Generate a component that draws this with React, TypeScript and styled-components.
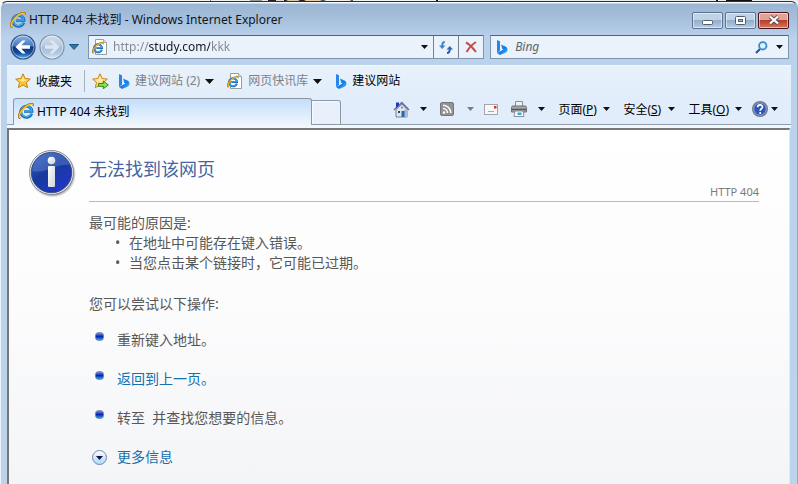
import React from 'react';
import styled, { createGlobalStyle, css } from 'styled-components';

const GlobalStyle = createGlobalStyle`
  *, *::before, *::after { box-sizing: border-box; }
  body { margin: 0; background: #fff; }
  body, button, input { font-family: "Noto Sans", "Noto Sans CJK SC", sans-serif; }
  button { border: 0; padding: 0; background: none; color: inherit; font-size: inherit; }
  svg { display: block; flex: none; }
`;

const Desktop = styled.div`
  display: flex;
  flex-direction: column;
  min-height: 100vh;
  padding-top: 1px;
  background: linear-gradient(90deg, #f6f6f4 0 210px, #778 210px 211px, #eef2f2 211px 250px, #999 250px 262px, #eee 262px 268px, #222 268px 276px, #ddd 276px 284px, #222 284px 286px, #dca 288px 298px, #222 300px 304px, #eca 306px 320px, #456 322px 324px, #eee 326px 350px, #654 351px 353px, #eef5f8 353px 436px, #111 436px 438px, #e8eef0 438px 716px, #111 716px 718px, #eee 718px 726px, #111 726px 752px, #eee 752px);
`;

const Window = styled.div`
  flex: 1;
  display: flex;
  flex-direction: column;
  padding: 0 6px;
  border: 1px solid #eef5fb;
  border-top-color: #263238;
  border-right-color: #4fc4e6;
  border-bottom: 0;
  border-radius: 7px 7px 0 0;
  background: linear-gradient(#f6fafd 0 1px, #9bb6d3 2px, #a7c0dc 18px, #bad2ec 36px, #bcd3eb 100%);
`;

const TitleBar = styled.header`
  display: flex;
  align-items: center;
  gap: 3px;
  height: 32px;
  padding: 4px 2px 0 3px;
`;

const WindowTitle = styled.h1`
  flex: 1;
  margin: 0;
  color: #10151c;
  font-size: 12px;
  font-weight: 400;
  line-height: 18px;
  white-space: nowrap;
`;

const WindowButtons = styled.div`
  display: flex;
  gap: 2px;
`;

const WindowButton = styled.button<{ $close?: boolean }>`
  display: grid;
  place-items: center;
  width: 31px;
  height: 17px;
  border: 1px solid #5d7490;
  border-radius: 2px;
  box-shadow: inset 0 0 0 1px rgba(255, 255, 255, 0.5);
  background: linear-gradient(#bfd2e6 0 50%, #93aecb 50%, #b3cce6);
  ${(p) => p.$close && css`
    border-color: #4b1420;
    background: linear-gradient(#e0a398 0 50%, #b83f2c 50%, #d27a58);
  `}
`;

const NavBar = styled.div`
  display: flex;
  align-items: center;
  height: 31px;
  padding: 0 2px 5px 3px;
`;

const HistoryButtons = styled.div`
  display: flex;
  align-items: center;
  gap: 3px;
  margin-right: 8px;
`;

const HistoryMenu = styled.button`
  display: grid;
  place-items: center;
  width: 12px;
  height: 24px;
`;

const Field = styled.div<{ $search?: boolean }>`
  display: flex;
  align-items: center;
  flex: ${(p) => (p.$search ? '297 1 0' : '398 1 0')};
  min-width: 0;
  height: 24px;
  margin-left: ${(p) => (p.$search ? '6px' : '0')};
  padding-left: ${(p) => (p.$search ? '5px' : '3px')};
  border: 1px solid #7e93ac;
  border-top-color: #5a6470;
  border-radius: 1px;
  background: #eaf2fb;
`;

const AddressInput = styled.input`
  flex: 1;
  min-width: 0;
  margin-left: 5px;
  padding: 0;
  border: 0;
  outline: 0;
  font-size: 12px;
  line-height: 20px;
  color: transparent;
  background: linear-gradient(90deg, #83878c 0 36px, #15181c 36px 97px, #83878c 97px);
  background-clip: text;
  -webkit-background-clip: text;
`;

const SearchInput = styled.input`
  flex: 1;
  min-width: 0;
  margin-left: 7px;
  padding: 0;
  border: 0;
  outline: 0;
  background: none;
  font-size: 12px;
  font-style: italic;
  line-height: 20px;
  &::placeholder { color: #5f656c; opacity: 1; }
`;

const FieldButton = styled.button<{ $divided?: boolean }>`
  display: grid;
  place-items: center;
  width: ${(p) => (p.$divided ? '25px' : '18px')};
  height: 22px;
  border-left: ${(p) => (p.$divided ? '1px solid #76818f' : '0')};
`;

const Chrome = styled.div`
  display: flex;
  flex-direction: column;
  border-top: 1px solid #f4f9fe;
  background: linear-gradient(#e9f2fb, #e1edfa 34px, #e1edfa);
`;

const FavoritesBar = styled.nav`
  display: flex;
  align-items: center;
  height: 32px;
  padding: 0 8px 2px;
`;

const FavoritesButton = styled.button`
  display: flex;
  align-items: center;
  gap: 4px;
  height: 22px;
  padding-right: 12px;
  border-right: 1px solid #a9b1ba;
  font-size: 12px;
  white-space: nowrap;
`;

const AddFavorite = styled.button`
  margin: 0 9px 0 7px;
`;

const Bookmark = styled.a<{ $dim?: boolean }>`
  display: flex;
  align-items: center;
  gap: 5px;
  margin-right: 13px;
  color: ${(p) => (p.$dim ? '#7d828a' : '#000')};
  font-size: 12px;
  line-height: 18px;
  text-decoration: none;
  white-space: nowrap;
`;

const TabRow = styled.div`
  display: flex;
  align-items: flex-end;
  height: 30px;
  padding-bottom: 3px;
  background: linear-gradient(transparent 26px, #8f9fb1 26px 27px, #f3f7fc 27px);
`;

const Tab = styled.button`
  display: flex;
  align-items: center;
  gap: 3px;
  flex: 0 1 299px;
  min-width: 140px;
  height: 27px;
  margin-left: 6px;
  padding: 0 0 2px 4px;
  border: 1px solid #8d98a5;
  border-bottom: 0;
  border-radius: 3px 3px 0 0;
  background: linear-gradient(#c3defb, #f0f6fd);
  font-size: 12px;
`;

const NewTab = styled.button`
  flex: none;
  width: 29px;
  height: 25px;
  border: 1px solid #8d98a5;
  border-left: 0;
  border-radius: 0 3px 0 0;
  background: #e8f1fb;
  box-shadow: inset 1px 1px #f8fbfe;
`;

const CommandBar = styled.div`
  flex: 1;
  align-self: stretch;
  display: flex;
  align-items: center;
  justify-content: flex-end;
  gap: 13px;
  padding: 0 13px 5px 0;
`;

const Command = styled.button<{ $size?: 'icon' | 'text' | 'single' }>`
  display: flex;
  align-items: center;
  justify-content: space-between;
  gap: ${(p) => (p.$size === 'text' ? '6px' : '4px')};
  min-width: ${(p) => (p.$size === 'text' ? '52px' : p.$size === 'single' ? '14px' : '34px')};
  margin-left: ${(p) => (p.$size === 'single' ? '-3px' : '0')};
  height: 20px;
  font-size: 12px;
  white-space: nowrap;
`;

const HelpCommand = styled(Command)`
  min-width: 26px;
  margin-left: -3px;
  gap: 2px;
`;

const Page = styled.main`
  flex: 1;
  margin-right: 1px;
  padding: 20px 30px 18px 20px;
  border: 2px solid #74777a;
  border-top-color: #77777a;
  border-right: 1px solid #e8e8e8;
  border-bottom: 0;
  background: linear-gradient(#fff, #fcfcfd 45%, #f4f5f7);
  color: #575757;
  font-size: 14px;
  line-height: 20px;
`;

const PageHeader = styled.div`
  display: grid;
  grid-template-columns: 48px 1fr;
  column-gap: 12px;
`;

const HeadingArea = styled.div`
  display: flex;
  flex-direction: column;
  height: 52px;
  padding-top: 6px;
  border-bottom: 1px solid #b6bac6;
`;

const Heading = styled.h2`
  margin: 0;
  color: #4465a2;
  font-size: 18px;
  font-weight: 400;
  line-height: 26px;
`;

const ErrorCode = styled.span`
  align-self: flex-end;
  color: #7b7b7b;
  font-size: 11px;
  line-height: 20px;
`;

const Body = styled.div`
  padding: 11px 0 0 60px;
`;

const Paragraph = styled.p`
  margin: 0;
`;

const Reasons = styled.ul`
  margin: 0 0 21px;
  padding-left: 40px;
`;

const Reason = styled.li`
  list-style: none;
  display: flex;
  &::before { content: "•"; width: 14px; margin-left: -14px; }
`;

const Actions = styled.ul`
  margin: 16px 0 0;
  padding: 0;
  list-style: none;
  display: grid;
  gap: 19px;
`;

const Action = styled.li`
  display: grid;
  grid-template-columns: 20px 1fr;
  column-gap: 8px;
  white-space: pre;
  svg { justify-self: center; margin-top: 2px; }
`;

const PageLink = styled.a`
  color: #1470b0;
  text-decoration: none;
`;

const MoreInfo = styled.button`
  display: flex;
  align-items: center;
  gap: 9px;
  margin: 19px 0 0 2px;
  color: #1470b0;
  font-size: 14px;
  line-height: 20px;
`;

const Arrow = ({ color = '#111', large }: { color?: string; large?: boolean }) => (
  <svg width={large ? 9 : 7} height={large ? 5 : 4} viewBox="0 0 7 4" preserveAspectRatio="none"><path d="M0 0h7L3.5 4z" fill={color} /></svg>
);

const IeShapes = () => (
  <>
    <path d="M13.7 10.6A5.6 5.6 0 1 1 14 8.4H6" fill="none" stroke="#1565b5" strokeWidth="2.8" />
    <path d="M13.4 10.4A5.4 5.4 0 1 1 13.8 8H6" fill="none" stroke="#41a9ec" strokeWidth="1.5" />
    <path d="M2.4 15.3C-1 14.5 1.7 8 6.6 4 11 .5 15.700-.5 15.400 3" fill="none" stroke="#a87308" strokeWidth="2" />
    <path d="M2.2 14.8C0 13.500 2.500 8 6.800 4.400 10.500 1.300 15 .2 15 2.800" fill="none" stroke="#ffc832" strokeWidth="1.300" />
  </>
);

const IeLogo = () => <svg width="16" height="16" viewBox="0 0 16 16"><IeShapes /></svg>;

const IePage = () => (
  <svg width="16" height="16" viewBox="0 0 16 16">
    <path d="M3.500.5h8l3 3v12h-11z" fill="#fff" stroke="#999ca0" />
    <path d="M11.500.5v3h3" fill="#ddd" stroke="#aaa" />
    <g transform="translate(0 3) scale(.72)"><IeShapes /></g>
  </svg>
);

const Bing = () => (
  <svg width="12" height="15" viewBox="0 0 12 15">
    <defs><linearGradient id="bing" x2="1" y2="1"><stop stopColor="#3c91ef" /><stop offset=".55" stopColor="#167be8" /><stop offset="1" stopColor="#48d2e6" /></linearGradient></defs>
    <path d="M1 0l3 1.300v9.400L1 13z" fill="#2786ec" />
    <path d="M5 4.500l5 2.200q1.500.9 1.500 2.800c0 1.700-1 2.700-2 3.300L4 15 1 13l6.500-3.500-1.300-.7z" fill="url(#bing)" />
  </svg>
);

const Star = ({ add }: { add?: boolean }) => (
  <svg width="17" height="16" viewBox="0 0 17 16">
    <path d="M8 .8l2.100 4.700 5.200.6-3.900 3.400 1.200 5.200L8 12l-4.700 2.700 1.200-5.200L.7 6.100l5.200-.6z" fill={add ? '#ffdf83' : '#ffc62c'} stroke="#c78314" strokeLinejoin="round" />
    <path d="M8 3l1.300 3.400 3.500.4L8 8.500 3.200 6.800l3.500-.4z" fill="#fff3b8" opacity=".8" />
    {add && <path d="M6.500 10.500h4.800V8l5 4-5 3.700v-2.400H6.500z" fill="#8fe04c" stroke="#258b23" strokeLinejoin="round" />}
  </svg>
);

const RoundArrow = ({ forward }: { forward?: boolean }) => {
  const id = forward ? 'forwardOrb' : 'backOrb';
  return (
    <svg width="26" height="26" viewBox="0 0 26 26">
      <defs>
        <linearGradient id={id} x2="0" y2="1">
          <stop stopColor={forward ? '#d2deeb' : '#90b4e5'} />
          <stop offset=".46" stopColor={forward ? '#b8cade' : '#4379c4'} />
          <stop offset=".5" stopColor={forward ? '#a6bdd6' : '#0d317f'} />
          <stop offset=".75" stopColor={forward ? '#aec7e0' : '#174b9e'} />
          <stop offset="1" stopColor={forward ? '#dce8f4' : '#5cc5ff'} />
        </linearGradient>
      </defs>
      <circle cx="13" cy="13" r="12" fill={`url(#${id})`} stroke={forward ? '#7f94ab' : '#344f7b'} strokeWidth="1.200" />
      <circle cx="13" cy="13" r="10.900" fill="none" stroke="#fff" opacity=".45" />
      <path d="M5.500 13l6.700-6.500h3.500l-4.300 4.800H20v3.400h-8.600l4.300 4.800h-3.500z" transform={forward ? 'matrix(-1 0 0 1 26 0)' : undefined} fill={forward ? '#dce6f0' : '#fff'} />
    </svg>
  );
};

const Refresh = () => (
  <svg width="14" height="13" viewBox="0 0 14 13">
    <path d="M5.800 1Q3.200 1 3.200 5" fill="none" stroke="#3c86c8" strokeWidth="2" /><path d="M0 4.500h6.400L3.200 8z" fill="#3c86c8" />
    <path d="M8 12q2.800 0 2.800-4" fill="none" stroke="#245fae" strokeWidth="2" /><path d="M7.500 8.500H14L10.800 5z" fill="#2c69b5" />
  </svg>
);

const Stop = () => (
  <svg width="12" height="12" viewBox="0 0 12 12"><path d="M1 1.500c4 2 6.500 5 10 9.500M11 1C7 3.500 4 7 1.500 11" fill="none" stroke="#c84a49" strokeWidth="2" /></svg>
);

const Search = () => (
  <svg width="13" height="13" viewBox="0 0 13 13"><path d="M5 8L1 12" stroke="#2a55a4" strokeWidth="2.200" /><circle cx="7.800" cy="4.800" r="3.700" fill="#dff1fc" stroke="#388bcd" strokeWidth="1.800" /></svg>
);

const Home = () => (
  <svg width="17" height="17" viewBox="0 0 17 17">
    <path d="M3 8.500L9 3l5 5.500V16H3z" fill="#e1e5ee" stroke="#778096" />
    <path d="M11 9v7h3.500V8z" fill="#afb8cc" />
    <path d="M1 9l7.800-7.500L16 9" fill="none" stroke="#6570a0" strokeWidth="1.500" />
    <path d="M3 1.500h3v3L3 7z" fill="#2739b8" />
    <path d="M8.500 10h3v6h-3z" fill="#2369ad" /><path d="M5 10h2v2H5z" fill="#28446d" />
    <circle cx="9" cy="6.500" r="1" fill="#6a7bb9" />
  </svg>
);

const Feed = () => (
  <svg width="14" height="14" viewBox="0 0 14 14">
    <rect x=".5" y=".5" width="13" height="13" rx="1.500" fill="#929292" stroke="#777" />
    <circle cx="4" cy="10.500" r="1.300" fill="#fff" /><path d="M3 6.500a4.500 4.500 0 0 1 4.500 4.500M3 3.200A7.800 7.800 0 0 1 10.800 11" fill="none" stroke="#fff" strokeWidth="1.500" />
  </svg>
);

const Mail = () => (
  <svg width="14" height="11" viewBox="0 0 14 11">
    <rect x=".5" y=".5" width="13" height="10" fill="#f7f7f8" stroke="#a2a5ac" /><path d="M4 7.500h6" stroke="#a8a8a8" /><path d="M10 2h2.500v2.500H10z" fill="#e22b27" />
  </svg>
);

const Printer = () => (
  <svg width="16" height="16" viewBox="0 0 16 16">
    <path d="M4.500.5h7V6h-7z" fill="#eef1f4" stroke="#8b9096" />
    <path d="M.5 6.500Q.5 5 2 5h12q1.500 0 1.500 1.500V11H.5z" fill="#a4a7ab" stroke="#6c6f73" /><path d="M1 8.500h14" stroke="#55585b" strokeWidth="1.500" />
    <path d="M4 10h8l1 5.500H3z" fill="#f9fbfd" stroke="#8b9096" /><path d="M6.500 11.500h4V14h-4z" fill="#38a5d4" />
  </svg>
);

const Help = () => (
  <svg width="16" height="16" viewBox="0 0 16 16">
    <circle cx="8" cy="8" r="7.300" fill="#2e55b5" stroke="#747c8a" strokeWidth="1.400" /><circle cx="8" cy="8" r="6.200" fill="none" stroke="#a9bce3" strokeWidth=".8" />
    <path d="M5.600 6.200C5.600 3 10.500 3.200 10.500 5.900 10.500 7.800 8.200 7.600 8.200 9.700" fill="none" stroke="#fff" strokeWidth="1.700" /><circle cx="8.200" cy="12" r="1.100" fill="#fff" />
  </svg>
);

const Info = () => (
  <svg width="48" height="48" viewBox="0 0 48 48">
    <defs>
      <linearGradient id="infoOrb" x2=".7" y2="1"><stop stopColor="#3665c6" /><stop offset=".5" stopColor="#173a9c" /><stop offset="1" stopColor="#2236c6" /></linearGradient>
      <linearGradient id="infoStem" x2="1" y2="1"><stop stopColor="#fff" /><stop offset="1" stopColor="#cfd1da" /></linearGradient>
      <radialGradient id="infoShadow"><stop offset=".85" stopOpacity=".45" /><stop offset="1" stopOpacity="0" /></radialGradient>
    </defs>
    <circle cx="23.500" cy="24" r="23.500" fill="url(#infoShadow)" />
    <circle cx="22.500" cy="22.500" r="22" fill="#f7f7f9" stroke="#858891" />
    <circle cx="22.500" cy="22.500" r="20.300" fill="url(#infoOrb)" stroke="#31426e" strokeWidth=".8" />
    <path d="M3 21C5 8 14 3 22.500 3S38 7 41 15C27 13 18 24 3 21z" fill="#7c9ce0" opacity=".35" />
    <circle cx="22.500" cy="10.500" r="3.800" fill="url(#infoStem)" /><rect x="19" y="16" width="7" height="21" rx="1" fill="url(#infoStem)" />
  </svg>
);

const Bullet = () => (
  <svg width="9" height="9" viewBox="0 0 9 9">
    <defs><linearGradient id="bead" x2="0" y2="1"><stop stopColor="#90a4de" /><stop offset=".35" stopColor="#2d49b4" /><stop offset=".5" stopColor="#0824b8" /><stop offset="1" stopColor="#29b9f0" /></linearGradient></defs>
    <rect x=".4" y=".4" width="8.200" height="8.200" rx="3.500" fill="url(#bead)" stroke="#7183ae" strokeWidth=".8" />
  </svg>
);

const Expand = () => (
  <svg width="17" height="17" viewBox="0 0 17 17">
    <defs><linearGradient id="expand" x2="0" y2="1"><stop stopColor="#fff" /><stop offset=".55" stopColor="#d3e3f4" /><stop offset="1" stopColor="#a7ddf5" /></linearGradient></defs>
    <circle cx="8.500" cy="8.500" r="7" fill="url(#expand)" stroke="#7287ac" /><path d="M5 7h7l-3.500 4z" fill="#0c1455" />
  </svg>
);

const menus = [['页面', 'P'], ['安全', 'S'], ['工具', 'O']];

export default function App() {
  return (
    <>
      <GlobalStyle />
      <Desktop>
        <Window>
          <TitleBar>
            <IeLogo />
            <WindowTitle>HTTP 404 未找到 - Windows Internet Explorer</WindowTitle>
            <WindowButtons>
              <WindowButton aria-label="最小化"><svg width="11" height="9" viewBox="0 0 11 9"><rect x=".5" y="4.500" width="10" height="4" rx="1" fill="#fff" stroke="#535e6c" /></svg></WindowButton>
              <WindowButton aria-label="最大化"><svg width="11" height="9" viewBox="0 0 11 9"><rect x=".5" y=".5" width="10" height="8" rx="1" fill="#fff" stroke="#535e6c" /><rect x="3.500" y="3.500" width="4" height="2" fill="#a7bdd5" stroke="#535e6c" /></svg></WindowButton>
              <WindowButton $close aria-label="关闭"><svg width="12" height="10" viewBox="0 0 12 10"><path d="M2 1.500l8 7M10 1.500l-8 7" stroke="#58464c" strokeWidth="4" /><path d="M2 1.500l8 7M10 1.500l-8 7" stroke="#fff" strokeWidth="2.300" /></svg></WindowButton>
            </WindowButtons>
          </TitleBar>
          <NavBar>
            <HistoryButtons>
              <button aria-label="后退"><RoundArrow /></button>
              <button aria-label="前进"><RoundArrow forward /></button>
              <HistoryMenu aria-label="历史记录"><svg width="10" height="6" viewBox="0 0 10 6"><path d="M.5.500h9L5 5.500z" fill="#1d80b4" stroke="#245276" /></svg></HistoryMenu>
            </HistoryButtons>
            <Field>
              <IePage />
              <AddressInput aria-label="地址" defaultValue="http://study.com/kkk" />
              <FieldButton aria-label="显示地址"><Arrow /></FieldButton>
              <FieldButton $divided aria-label="刷新"><Refresh /></FieldButton>
              <FieldButton $divided aria-label="停止"><Stop /></FieldButton>
            </Field>
            <Field $search>
              <Bing />
              <SearchInput aria-label="搜索" placeholder="Bing" />
              <FieldButton aria-label="开始搜索"><Search /></FieldButton>
              <FieldButton aria-label="搜索选项"><Arrow /></FieldButton>
            </Field>
          </NavBar>
          <Chrome>
            <FavoritesBar>
              <FavoritesButton><Star />收藏夹</FavoritesButton>
              <AddFavorite aria-label="添加到收藏夹栏"><Star add /></AddFavorite>
              <Bookmark $dim href="#suggested"><Bing />建议网站 (2)<Arrow large /></Bookmark>
              <Bookmark $dim href="#gallery"><IePage />网页快讯库<Arrow large /></Bookmark>
              <Bookmark href="#sites"><Bing />建议网站</Bookmark>
            </FavoritesBar>
            <TabRow>
              <Tab><IeLogo />HTTP 404 未找到</Tab>
              <NewTab aria-label="新选项卡" />
              <CommandBar>
                <Command aria-label="主页"><Home /><Arrow /></Command>
                <Command aria-label="源"><Feed /><Arrow color="#777d85" /></Command>
                <Command $size="single" aria-label="阅读邮件"><Mail /></Command>
                <Command aria-label="打印"><Printer /><Arrow /></Command>
                {menus.map(([label, key]) => (
                  <Command $size="text" key={key}><span>{label}(<u>{key}</u>)</span><Arrow /></Command>
                ))}
                <HelpCommand aria-label="帮助"><Help /><Arrow /></HelpCommand>
              </CommandBar>
            </TabRow>
          </Chrome>
          <Page>
            <PageHeader>
              <Info />
              <HeadingArea>
                <Heading>无法找到该网页</Heading>
                <ErrorCode>HTTP 404</ErrorCode>
              </HeadingArea>
            </PageHeader>
            <Body>
              <Paragraph>最可能的原因是:</Paragraph>
              <Reasons>
                <Reason>在地址中可能存在键入错误。</Reason>
                <Reason>当您点击某个链接时，它可能已过期。</Reason>
              </Reasons>
              <Paragraph>您可以尝试以下操作:</Paragraph>
              <Actions>
                <Action><Bullet /><span>重新键入地址。</span></Action>
                <Action><Bullet /><PageLink href="#back">返回到上一页。</PageLink></Action>
                <Action><Bullet /><span>{'转至  并查找您想要的信息。'}</span></Action>
              </Actions>
              <MoreInfo><Expand />更多信息</MoreInfo>
            </Body>
          </Page>
        </Window>
      </Desktop>
    </>
  );
}
